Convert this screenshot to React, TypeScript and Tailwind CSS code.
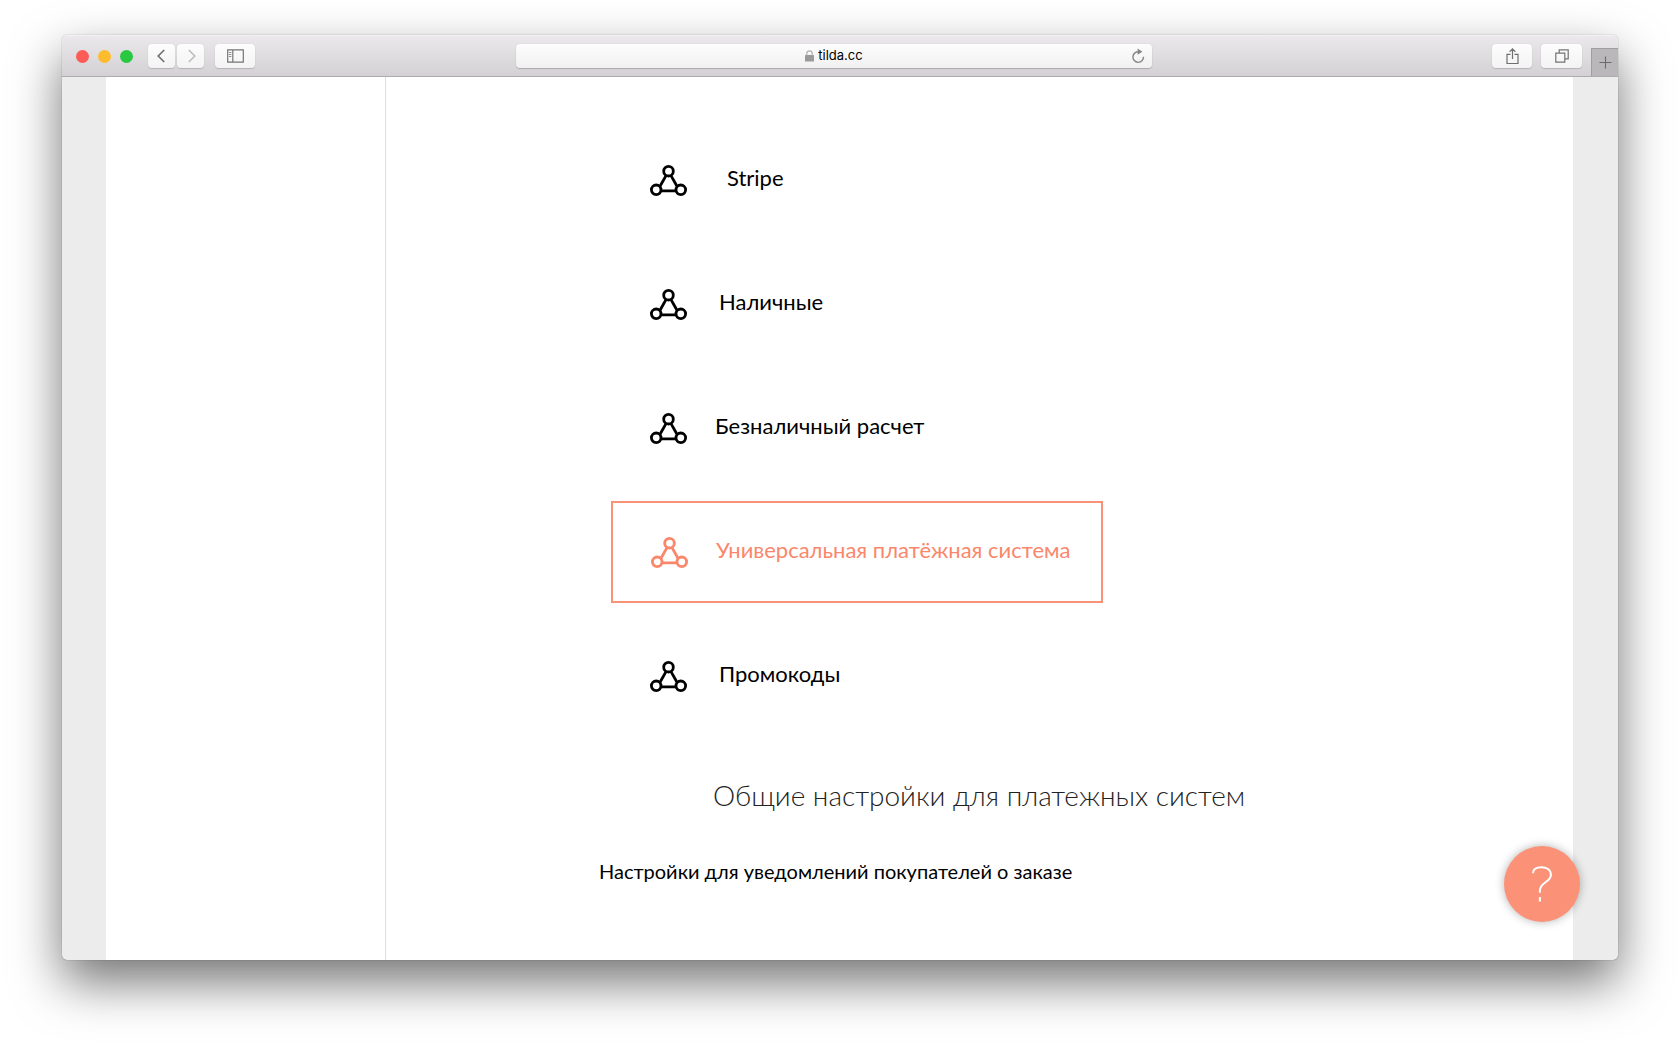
import React from "react";

type Method = { name: string; gap: string; active?: boolean };

const methods: Method[] = [
  { name: "Stripe", gap: "gap-10" },
  { name: "Наличные", gap: "gap-8" },
  { name: "Безналичный расчет", gap: "gap-7" },
  { name: "Универсальная платёжная система", gap: "gap-7", active: true },
  { name: "Промокоды", gap: "gap-8" },
];

function NodesIcon() {
  return (
    <svg viewBox="0 0 37 31" className="h-[31px] w-[37px] shrink-0" fill="none" stroke="currentColor" strokeWidth="2.8" aria-hidden="true">
      <circle cx="18.500" cy="6.200" r="4.800" />
      <circle cx="6.200" cy="24.800" r="4.800" />
      <circle cx="30.800" cy="24.800" r="4.800" />
      <path d="M16 10.600 10 21.200M21 10.600l6 10.600M11 25.800h15" />
    </svg>
  );
}

function ToolButton({ label, className, children }: { label: string; className: string; children: React.ReactNode }) {
  return (
    <button
      type="button"
      aria-label={label}
      className={`flex h-6 items-center justify-center rounded-[4px] bg-linear-to-b from-[#fdfdfd] to-[#f3f3f3] shadow-[0_0_1px_rgba(0,0,0,0.15),0_1px_1px_rgba(0,0,0,0.15)] ${className}`}
    >
      {children}
    </button>
  );
}

function Toolbar() {
  return (
    <header className="grid h-[42px] shrink-0 grid-cols-[454px_minmax(0,1fr)_466px] items-center rounded-t-[5px] border-b border-[#aeabae] bg-linear-to-b from-[#ebe9eb] to-[#d3d1d3] pt-px shadow-[inset_0_1px_0_#f3f1f3]">
      <div className="flex items-center pl-[14px]">
        <div className="flex gap-[9px]">
          <span className="size-[13px] rounded-full bg-[#fc5b57]" />
          <span className="size-[13px] rounded-full bg-[#fdbc2e]" />
          <span className="size-[13px] rounded-full bg-[#28c840]" />
        </div>
        <div className="ml-[15px] flex gap-[2px]">
          <ToolButton label="Назад" className="w-[27px] pr-0.5">
            <svg viewBox="0 0 8 14" className="h-[14px] w-2" fill="none" stroke="#6c6c6c" strokeWidth="1.6" aria-hidden="true">
              <path d="M7.2 1 1.2 7l6 6" />
            </svg>
          </ToolButton>
          <ToolButton label="Вперёд" className="w-[27px] pl-0.5">
            <svg viewBox="0 0 8 14" className="h-[14px] w-2" fill="none" stroke="#bcbcbc" strokeWidth="1.6" aria-hidden="true">
              <path d="m.8 1 6 6-6 6" />
            </svg>
          </ToolButton>
        </div>
        <ToolButton label="Боковое меню" className="ml-[11px] w-10">
          <svg viewBox="0 0 17 14" className="h-[14px] w-[17px]" fill="none" stroke="#747474" aria-hidden="true">
            <path d="M.7.9h15.6v12.2H.7zM5.8.9v12.2" strokeWidth="1.2" />
            <path d="M2 3.5h2.4M2 5.5h2.4M2 7.5h2.4" strokeWidth=".8" />
          </svg>
        </ToolButton>
      </div>

      <div className="relative flex h-6 items-center justify-center gap-1 rounded-[4px] bg-linear-to-b from-[#fdfdfd] to-[#f1f1f1] font-['Inter','Liberation_Sans',sans-serif] text-[13px] text-black shadow-[0_0_1px_rgba(0,0,0,0.15),0_1px_1px_rgba(0,0,0,0.2)]">
        <svg viewBox="0 0 9 12" className="h-3 w-[9px]" aria-hidden="true">
          <rect y="5" width="9" height="6.5" rx=".6" fill="#9a9a9a" />
          <path d="M1.8 5.5V3.5a2.7 2.7 0 0 1 5.4 0v2" fill="none" stroke="#b0b0b0" strokeWidth="1.2" />
        </svg>
        <span>tilda.cc</span>
        <button type="button" aria-label="Обновить" className="absolute right-1.5 flex size-4 items-center justify-center">
          <svg viewBox="0 0 14 16" className="h-4 w-[14px]" aria-hidden="true">
            <path d="M8 3.8a5.3 5.3 0 1 0 4.5 5" fill="none" stroke="#858585" strokeWidth="1.4" />
            <path d="M6.6.6 11.4 3.8 6.6 6.8z" fill="#858585" />
          </svg>
        </button>
      </div>

      <div className="flex h-full items-center justify-end">
        <ToolButton label="Поделиться" className="w-10">
          <svg viewBox="0 0 13 17" className="h-[17px] w-[13px]" fill="none" stroke="#6f6f6f" strokeWidth="1.2" aria-hidden="true">
            <path d="M4.5 6.3H1v9.2h11V6.3H8.5M6.5 11V1M3.6 3.8 6.5.9l2.9 2.9" />
          </svg>
        </ToolButton>
        <ToolButton label="Показать все вкладки" className="ml-[9px] w-[41px]">
          <svg viewBox="0 0 14 14" className="size-[14px]" fill="none" stroke="#747474" strokeWidth="1.2" aria-hidden="true">
            <path d="M.8 4.2h9v9h-9zM4.2 4.2V.8h9v9H9.8" />
          </svg>
        </ToolButton>
        <button type="button" aria-label="Новая вкладка" className="ml-[9px] flex h-7 w-[27px] items-center justify-center self-end border-t border-l border-[#a09ea0] bg-[#b9b7b9]">
          <svg viewBox="0 0 13 13" className="size-[13px]" stroke="#6b6b6b" strokeWidth="1.1" aria-hidden="true">
            <path d="M6.5.5v12M.5 6.5h12" />
          </svg>
        </button>
      </div>
    </header>
  );
}

export default function App() {
  return (
    <div className="flex min-h-screen flex-col overflow-hidden bg-white px-[62px] pt-[35px] pb-[88px] font-['Lato','Open_Sans',sans-serif] text-black">
      <div className="relative flex flex-1 flex-col rounded-[5px] bg-[#ececec] shadow-[0_0_1px_rgba(0,0,0,0.6),0_22px_50px_rgba(0,0,0,0.55)]">
        <Toolbar />
        <div className="mr-[45px] ml-[44px] flex flex-1 bg-white">
          <aside className="w-[280px] shrink-0 border-r border-[#dedede]" />
          <main className="flex-1 pt-[52px] pl-[225px]">
            <ul className="flex flex-col items-start gap-[22px]">
              {methods.map((m) => (
                <li key={m.name}>
                  <a
                    href="#"
                    className={`flex h-[102px] items-center border-2 text-[22px] whitespace-nowrap ${m.gap} ${
                      m.active ? "w-[492px] border-[#fa9277] pl-[38px] text-[#fa876b]" : "border-transparent pl-[37px]"
                    }`}
                  >
                    <NodesIcon />
                    <span className="pb-1.5">{m.name}</span>
                  </a>
                </li>
              ))}
            </ul>
            <h2 className="mt-12 ml-[102px] text-[28px] leading-10 font-light text-[#222]">Общие настройки для платежных систем</h2>
            <p className="mt-10 -ml-3 text-xl leading-8">Настройки для уведомлений покупателей о заказе</p>
          </main>
        </div>
        <button type="button" aria-label="Помощь" className="absolute right-[38px] bottom-[38px] flex size-[76px] items-center justify-center rounded-full bg-[#fb9278] shadow-[0_0_10px_rgba(0,0,0,0.3)]">
          <svg viewBox="0 0 20 36" className="h-9 w-5" fill="none" stroke="white" strokeWidth="2" aria-hidden="true">
            <path d="M1 7.3C1 3 4.6 1.2 9.5 1.2c5.600 0 9.400 2.900 9.400 7.500C18.900 16.500 7.900 16 7.900 24.500v2.300" />
            <path d="M7.900 31v4.600" />
          </svg>
        </button>
      </div>
    </div>
  );
}
